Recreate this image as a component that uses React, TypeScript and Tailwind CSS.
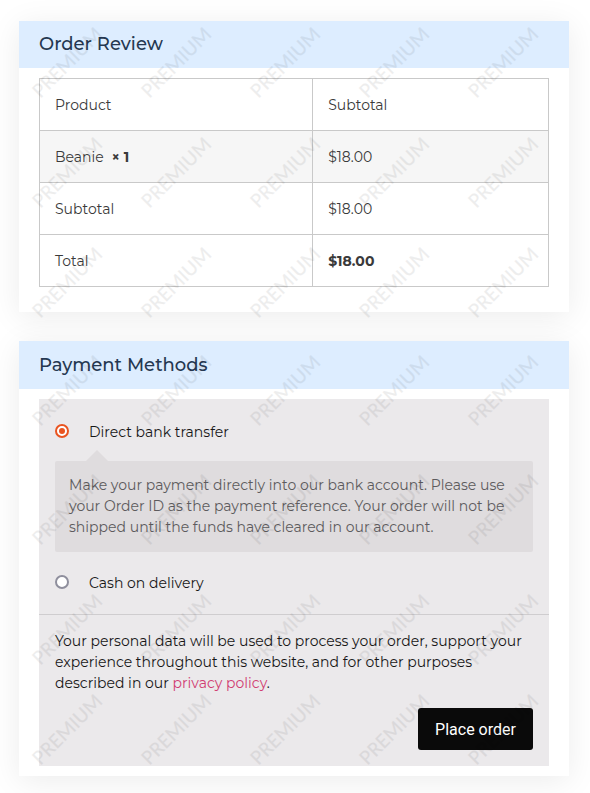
import React from "react";

const watermarkRows = [27, 137, 247, 355, 474, 594, 694];
const watermarkColumns = [32, 141, 250, 359, 468];

function Watermarks() {
  return (
    <div className="pointer-events-none absolute inset-0 overflow-hidden" aria-hidden="true">
      {watermarkRows.map((top) =>
        watermarkColumns.map((left) => (
          <span
            key={`${top}-${left}`}
            className="absolute flex h-[71px] w-[71px] items-center justify-center"
            style={{ top, left }}
          >
            <span className="-rotate-45 font-[Carlito,Lato,sans-serif] text-[21.33px] leading-none tracking-[0.12px] whitespace-nowrap text-black opacity-[0.065] [-webkit-text-stroke:0.2px_black]">
              PREMIUM
            </span>
          </span>
        )),
      )}
    </div>
  );
}

function Row({ label, value, shaded = false }: { label: React.ReactNode; value: React.ReactNode; shaded?: boolean }) {
  return (
    <tr className={shaded ? "bg-[#f6f6f6]" : ""}>
      <td className="h-[52px] w-[273px] border border-[#c9c9c9] px-[15px] pt-[2px] pb-0">{label}</td>
      <td className="h-[52px] border border-[#c9c9c9] px-[15.2px] pt-[2px] pb-0">{value}</td>
    </tr>
  );
}

export default function App() {
  return (
    <main className="relative flex h-[793px] w-[590px] flex-col gap-[29px] overflow-hidden bg-white px-[19px] pt-[21px] pb-[17px] font-[Montserrat,Inter,sans-serif] text-[14px] tracking-[0.008px]">
      <section className="h-[291px] w-[550px] bg-white shadow-[0_5px_30px_rgba(0,0,0,0.08)]">
        <h2 className="flex h-[47px] items-center bg-[#ddedff] px-5 text-[18px] font-medium text-[#253851]">
          <span className="-mt-px">Order Review</span>
        </h2>
        <div className="px-5 pt-[10px]">
          <table className="w-[510px] table-fixed border-collapse text-[#3a3a3a]">
            <tbody>
              <Row label="Product" value="Subtotal" />
              <Row
                shaded
                label={
                  <>
                    Beanie <strong className="ml-[4px]">×&nbsp;1</strong>
                  </>
                }
                value="$18.00"
              />
              <Row label="Subtotal" value="$18.00" />
              <Row label="Total" value={<strong>$18.00</strong>} />
            </tbody>
          </table>
        </div>
      </section>

      <section className="h-[435px] w-[550px] shrink-0 bg-white shadow-[0_5px_30px_rgba(0,0,0,0.08)]">
        <h2 className="flex h-12 items-center bg-[#ddedff] px-5 text-[18px] font-medium text-[#253851]">
          <span>Payment Methods</span>
        </h2>
        <div className="px-5 pt-[10px]">
          <div className="h-[367px] bg-[#ebe9eb] text-[#171717]">
            <div className="h-[216px] border-b border-[#cfcdcf] px-4 pt-[22px]">
              <label className="flex h-[21px] items-center">
                <span className="mb-[1px] flex size-[14px] items-center justify-center rounded-full border-2 border-[#e95420] bg-white">
                  <span className="size-[6px] rounded-full bg-[#e95420]" />
                </span>
                <span className="ml-5 pt-[2px]">Direct bank transfer</span>
              </label>
              <div className="relative mt-[19px] h-[91px] rounded-[2px] bg-[#dfdcde] px-[14px] pt-[14px] leading-[21px] whitespace-nowrap text-[#5d5b5d]">
                <span className="absolute -top-[11px] left-[31px] h-0 w-0 border-x-[11px] border-b-[11px] border-x-transparent border-b-[#dfdcde]" />
                <p>Make your payment directly into our bank account. Please use</p>
                <p>your Order ID as the payment reference. Your order will not be</p>
                <p>shipped until the funds have cleared in our account.</p>
              </div>
              <label className="mt-5 flex h-[21px] items-center">
                <span className="mb-[1px] size-[14px] rounded-full border-2 border-[#8f8f9d] bg-white" />
                <span className="ml-5 pt-[2px]">Cash on delivery</span>
              </label>
            </div>
            <div className="flex flex-col px-4 pt-4">
              <div className="leading-[21px] whitespace-nowrap">
                <p>Your personal data will be used to process your order, support your</p>
                <p>experience throughout this website, and for other purposes</p>
                <p>
                  described in our <a className="text-[#d13d72]">privacy policy</a>.
                </p>
              </div>
              <button className="mt-[14px] h-[42px] w-[115px] self-end rounded-[3px] bg-[#0a0a0a] pt-[2px] font-[Roboto,sans-serif] text-[16px] text-white">
                Place order
              </button>
            </div>
          </div>
        </div>
      </section>
      <Watermarks />
    </main>
  );
}
